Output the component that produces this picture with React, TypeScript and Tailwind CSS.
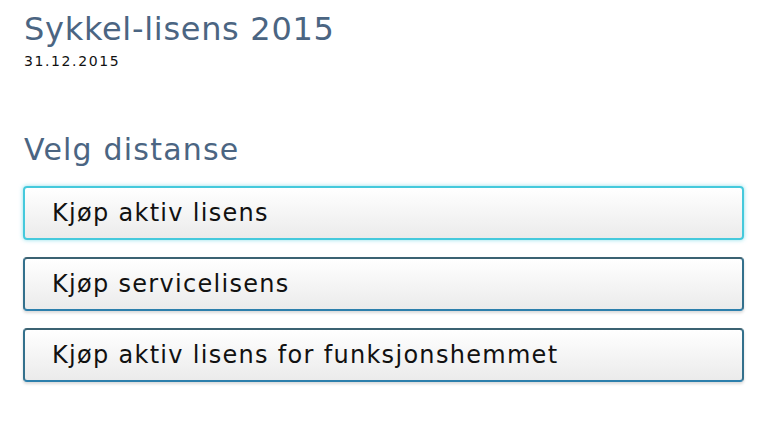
export default function App() {
  const options = [
    { label: 'Kjøp aktiv lisens', focused: true },
    { label: 'Kjøp servicelisens', focused: false },
    { label: 'Kjøp aktiv lisens for funksjonshemmet', focused: false },
  ];

  return (
    <div className="min-h-[423px] bg-white px-6 pt-[9px] font-['DejaVu_Sans',sans-serif]">
      <h1 className="text-[32px] leading-[40px] tracking-[0.7px] text-[#4b6582]">Sykkel-lisens 2015</h1>
      <p className="mt-[3px] text-[14px] leading-[18px] tracking-[1.6px] text-[#111]">31.12.2015</p>

      <h2 className="mt-[61px] text-[30px] leading-[38px] tracking-[1.2px] text-[#4b6582]">Velg distanse</h2>

      <div className="mt-[17px] flex w-[721px] flex-col gap-[17px] ml-[-1px]">
        {options.map((o) => (
          <button
            key={o.label}
            className={
              'h-[54px] w-full rounded-[4px] border-2 bg-gradient-to-b from-white to-[#ebebeb] pl-[27px] text-left text-[24px] tracking-[1.3px] text-[#111] ' +
              (o.focused
                ? 'border-[#45c9dc] shadow-[0_0_4px_rgba(69,201,220,0.6)]'
                : 'border-t-[#3b6272] border-x-[#33708c] border-b-[#2c7fac] shadow-[0_2px_3px_rgba(0,0,0,0.15)]')
            }
          >
            {o.label}
          </button>
        ))}
      </div>
    </div>
  );
}
